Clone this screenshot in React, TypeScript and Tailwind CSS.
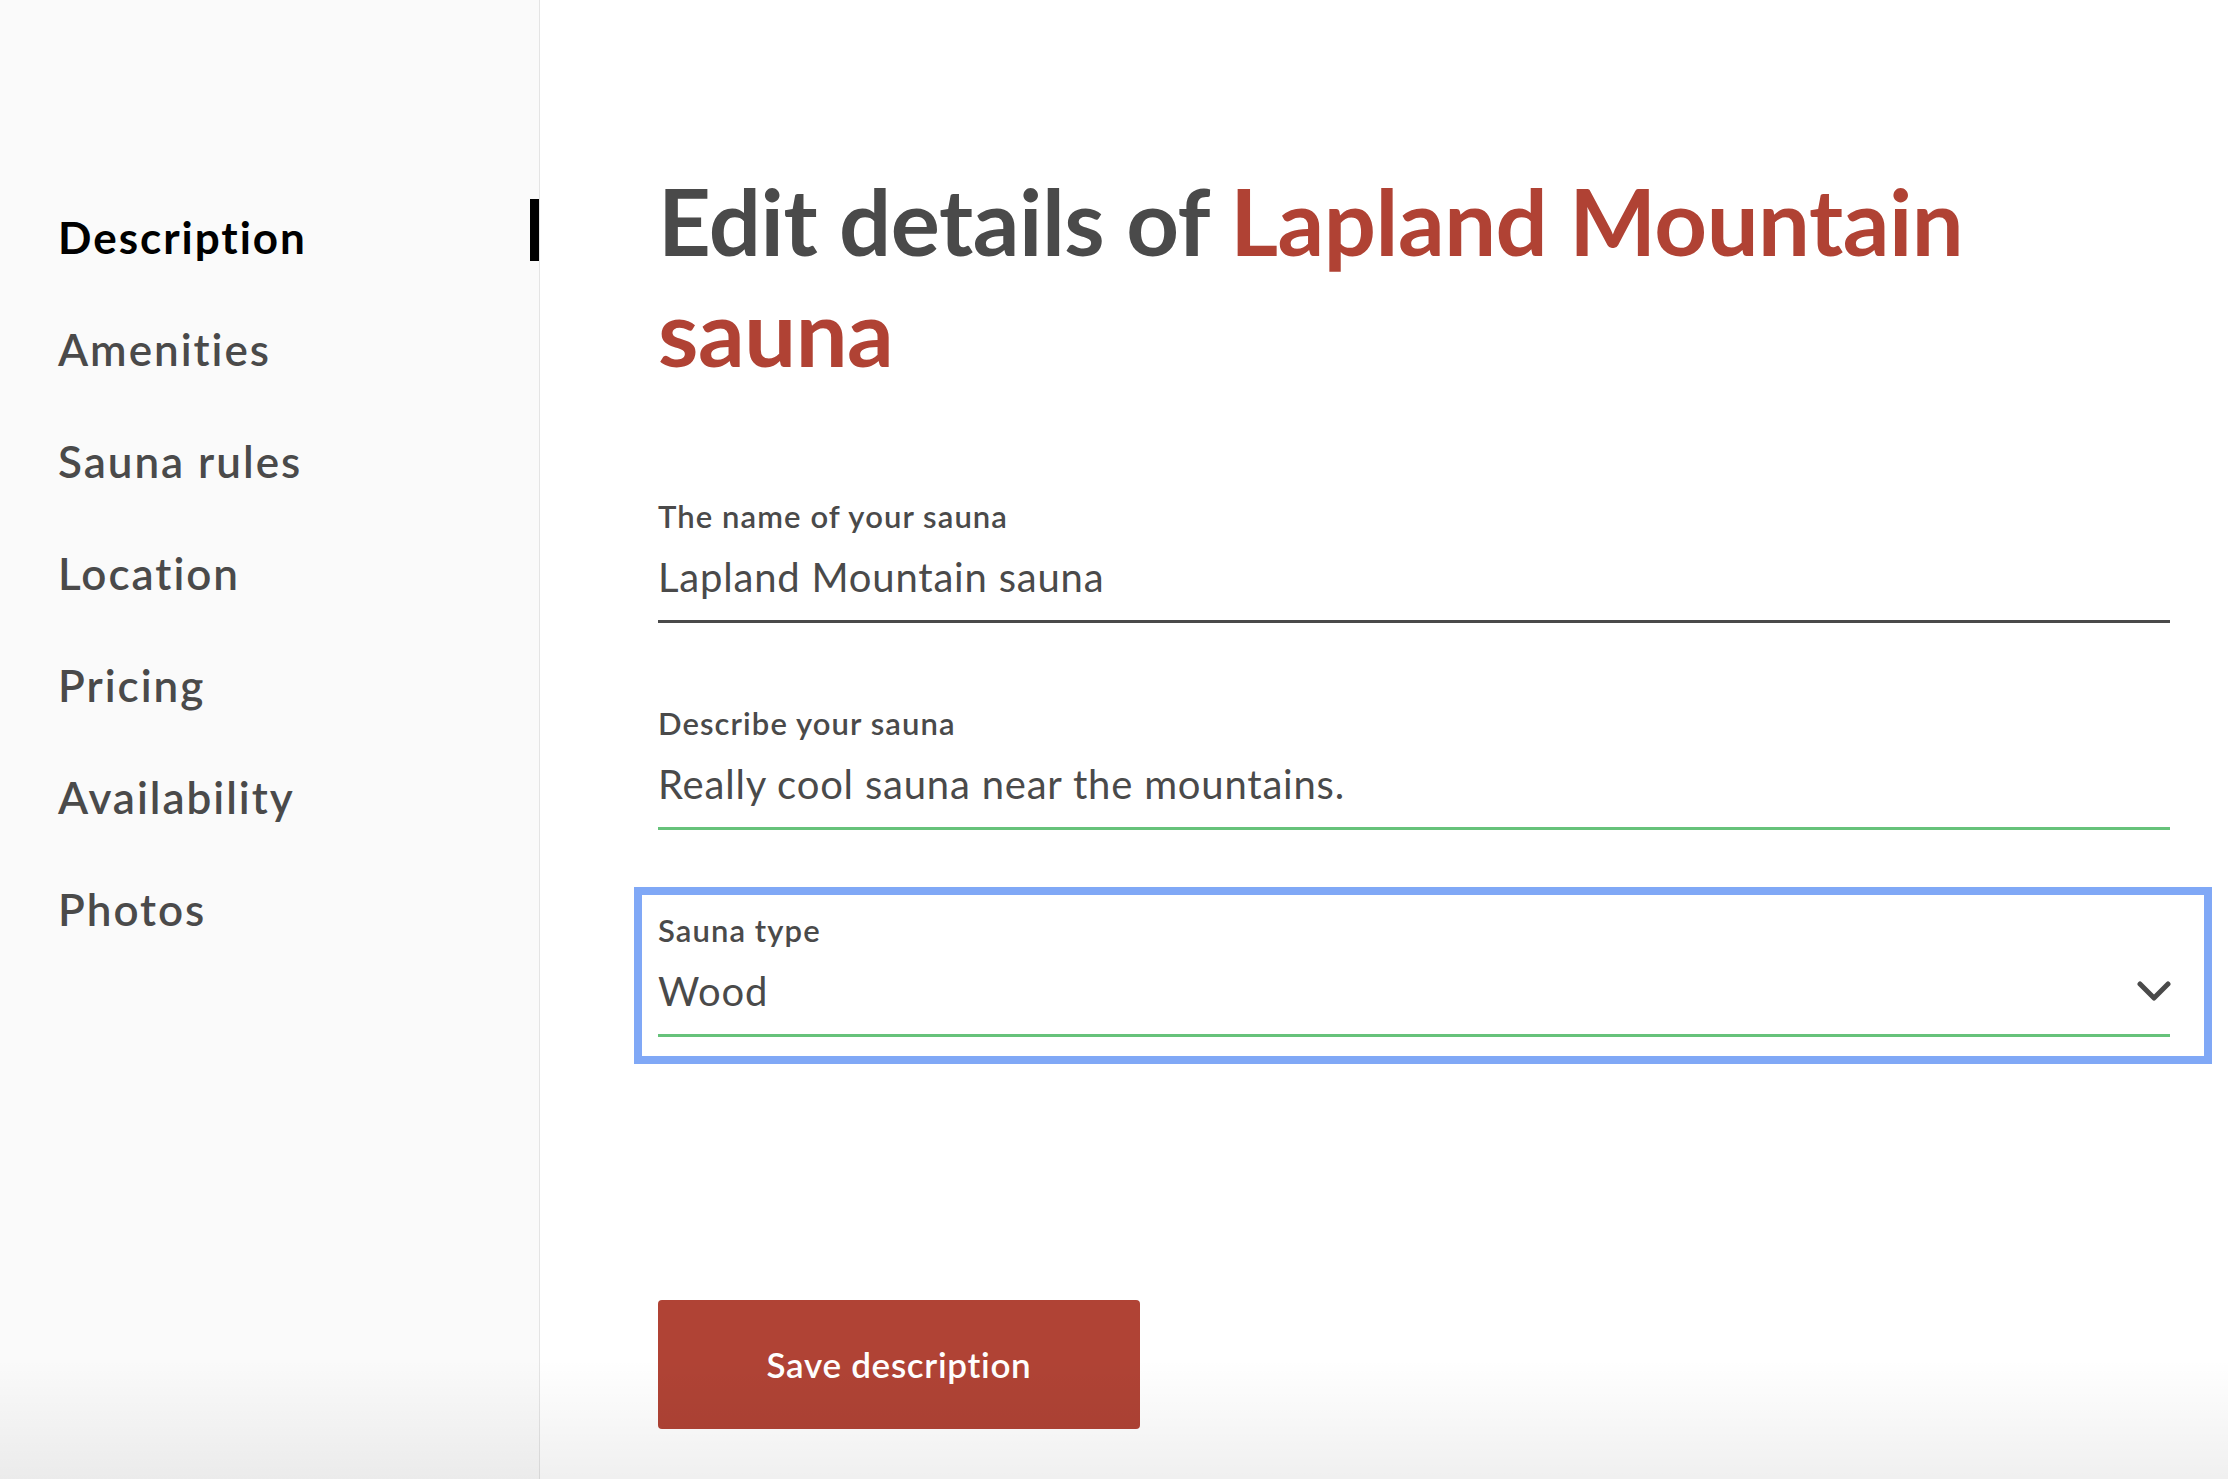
import React from "react";

const navItems = [
  "Description",
  "Amenities",
  "Sauna rules",
  "Location",
  "Pricing",
  "Availability",
  "Photos",
];

function Field({
  label,
  value,
  lineClass,
  select,
}: {
  label: string;
  value: string;
  lineClass: string;
  select?: boolean;
}) {
  return (
    <div className="relative">
      {select && (
        <div className="pointer-events-none absolute left-[-24px] right-[-42px] top-[-25px] bottom-[-27px] border-[8px] border-[#80a8f6]" />
      )}
      <div className="text-[31px] leading-[36px] font-semibold tracking-[0.035em] text-[#4a4a4a]">{label}</div>
      <div className="mt-[19px] flex items-center justify-between">
        <span className="text-[40px] leading-[48px] tracking-[0.02em] text-[#4a4a4a]">{value}</span>
        {select && (
          <svg width="34" height="22" viewBox="0 0 34 22" className="mr-[-1px]">
            <polyline
              points="3,4 17,18 31,4"
              fill="none"
              stroke="#4a4a4a"
              strokeWidth="5"
              strokeLinecap="round"
              strokeLinejoin="round"
            />
          </svg>
        )}
      </div>
      <div className={`mt-[19px] h-[3px] ${lineClass}`} />
    </div>
  );
}

export default function App() {
  return (
    <div className="relative flex min-h-screen bg-white font-['Lato',sans-serif] overflow-hidden">
      <aside className="w-[540px] shrink-0 border-r border-[#e4e4e4] bg-[#fafafa] pt-[181px]">
        <nav className="flex flex-col">
          {navItems.map((item, i) => (
            <div key={item} className="flex h-[112px] items-center justify-between pl-[58px]">
              <span
                className={
                  i === 0
                    ? "text-[44px] font-bold tracking-[0.045em] text-black"
                    : "text-[44px] font-semibold tracking-[0.045em] text-[#4a4a4a]"
                }
              >
                {item}
              </span>
              {i === 0 && <span className="mb-[14px] h-[62px] w-[9px] bg-black" />}
            </div>
          ))}
        </nav>
      </aside>

      <main className="flex-1 pl-[118px] pr-[58px] pt-[165px]">
        <h1 className="text-[92px] leading-[111px] font-bold tracking-[-0.005em] text-[#4a4a4a]">
          Edit details of{" "}
          <span className="text-[#b04234]">Lapland Mountain</span>{" "}
          <span className="text-[#b04234]">sauna</span>
        </h1>

        <div className="mt-[111px] flex flex-col gap-[82px]">
          <Field label="The name of your sauna" value="Lapland Mountain sauna" lineClass="bg-[#4a4a4a]" />
          <Field
            label="Describe your sauna"
            value="Really cool sauna near the mountains."
            lineClass="bg-[#66c27a]"
          />
          <Field label="Sauna type" value="Wood" lineClass="bg-[#66c27a]" select />
        </div>

        <button className="mt-[263px] flex h-[129px] w-[482px] items-center justify-center rounded-[4px] bg-[#b04335] text-[35px] font-semibold tracking-[0.02em] text-white">
          Save description
        </button>
      </main>

      <div className="pointer-events-none absolute inset-x-0 bottom-0 h-[120px] bg-gradient-to-b from-transparent to-black/[0.06]" />
    </div>
  );
}
